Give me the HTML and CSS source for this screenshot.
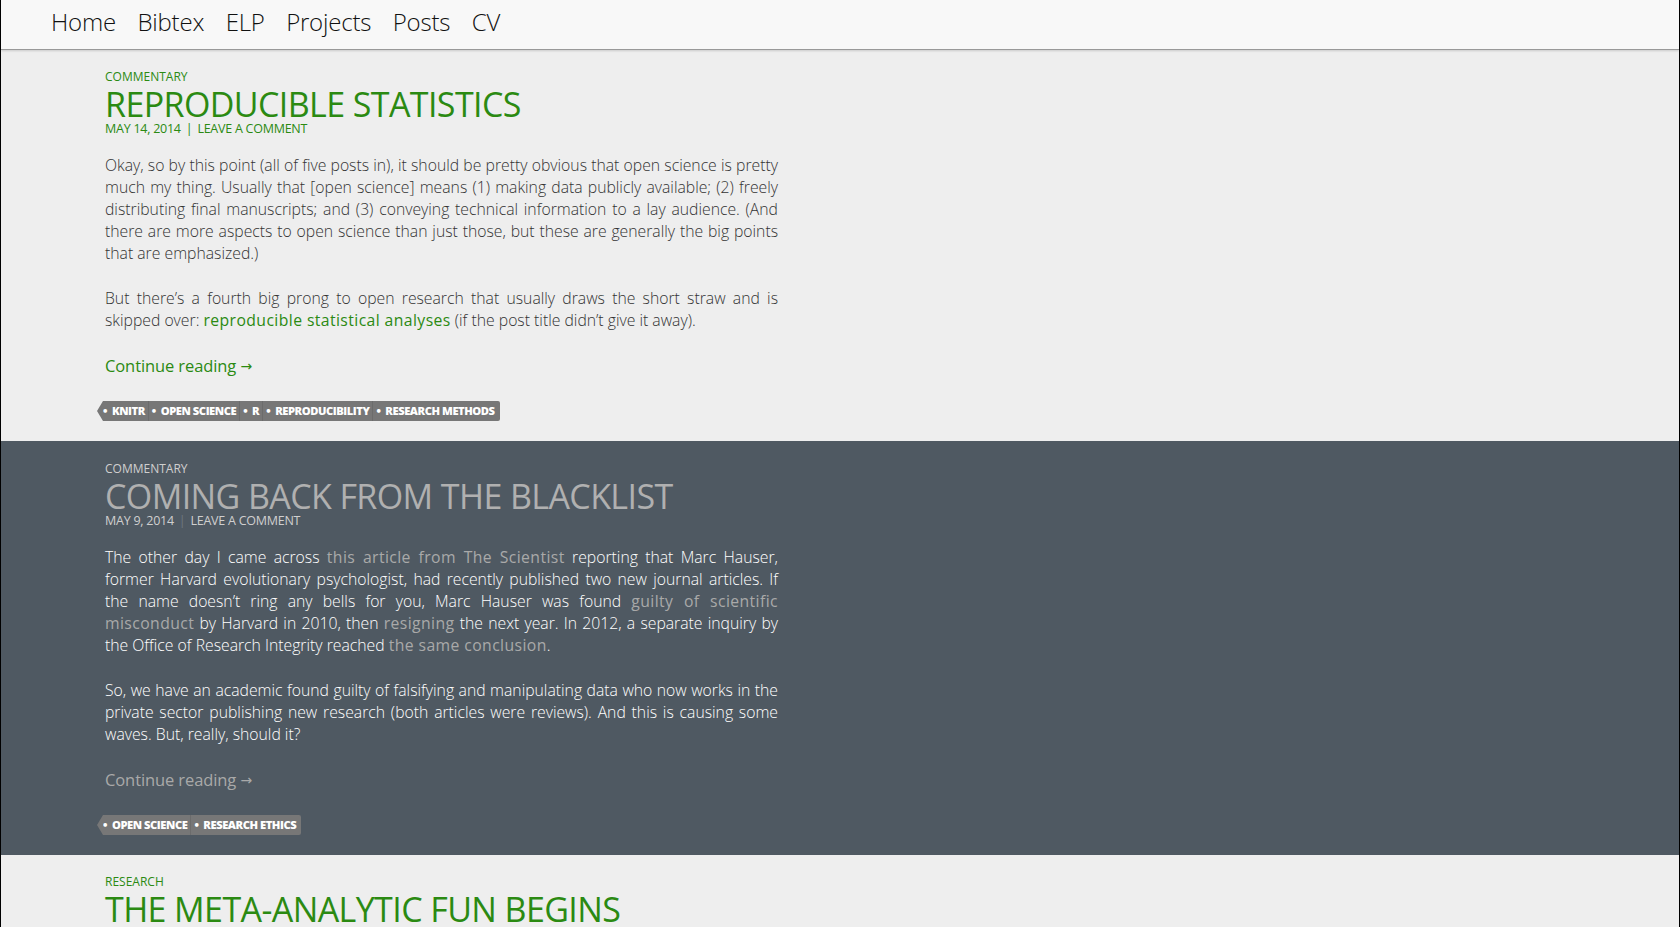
FILE: index.html
```html
<!DOCTYPE html>
<html lang="en">
<head>
<meta charset="utf-8">
<title>Posts</title>
<link rel="stylesheet" href="styles.css">
</head>
<body>
<header class="site-header">
  <nav class="nav">
    <a href="#">Home</a>
    <a href="#">Bibtex</a>
    <a href="#">ELP</a>
    <a href="#">Projects</a>
    <a href="#">Posts</a>
    <a href="#">CV</a>
  </nav>
</header>

<main>
  <article class="post post-light">
    <div class="post-inner">
      <div class="cat"><a href="#">Commentary</a></div>
      <h2 class="title"><a href="#">Reproducible Statistics</a></h2>
      <div class="meta"><a href="#">May 14, 2014</a><span class="sep">|</span><a href="#">Leave a comment</a></div>
      <div class="entry">
        <p>Okay, so by this point (all of five posts in), it should be pretty obvious that open science is pretty much my thing. Usually that [open science] means (1) making data publicly available; (2) freely distributing final manuscripts; and (3) conveying technical information to a lay audience. (And there are more aspects to open science than just those, but these are generally the big points that are emphasized.)</p>
        <p>But there’s a fourth big prong to open research that usually draws the short straw and is skipped over: <a href="#">reproducible statistical analyses</a> (if the post title didn’t give it away).</p>
        <p class="more"><a href="#">Continue reading <span class="arrow">→</span></a></p>
      </div>
      <ul class="tags">
        <li>knitr</li><li>open science</li><li>R</li><li>reproducibility</li><li>research methods</li>
      </ul>
    </div>
  </article>

  <article class="post post-dark">
    <div class="post-inner">
      <div class="cat"><a href="#">Commentary</a></div>
      <h2 class="title"><a href="#">Coming back from the blacklist</a></h2>
      <div class="meta"><a href="#">May 9, 2014</a><span class="sep">|</span><a href="#">Leave a comment</a></div>
      <div class="entry">
        <p>The other day I came across <a href="#">this article from The Scientist</a> reporting that Marc Hauser, former Harvard evolutionary psychologist, had recently published two new journal articles. If the name doesn’t ring any bells for you, Marc Hauser was found <a href="#">guilty of scientific misconduct</a> by Harvard in 2010, then <a href="#">resigning</a> the next year. In 2012, a separate inquiry by the Office of Research Integrity reached <a href="#">the same conclusion</a>.</p>
        <p>So, we have an academic found guilty of falsifying and manipulating data who now works in the private sector publishing new research (both articles were reviews). And this is causing some waves. But, really, should it?</p>
        <p class="more"><a href="#">Continue reading <span class="arrow">→</span></a></p>
      </div>
      <ul class="tags">
        <li>open science</li><li>research ethics</li>
      </ul>
    </div>
  </article>

  <article class="post post-light">
    <div class="post-inner">
      <div class="cat"><a href="#">Research</a></div>
      <h2 class="title"><a href="#">The meta-analytic fun begins</a></h2>
    </div>
  </article>
</main>
</body>
</html>
```

FILE: styles.css
```css
html, body {
  margin: 0;
  padding: 0;
}
body {
  background: #eeeeee;
  font-family: "Open Sans", "Liberation Sans", sans-serif;
  border-left: 1px solid #000;
  border-right: 1px solid #000;
  height: 927px;
  overflow: hidden;
  box-sizing: border-box;
}
a { text-decoration: none; }

.site-header {
  height: 49px;
  background: #f8f8f8;
  border-bottom: 1px solid #999;
  box-shadow: 0 1px 2px rgba(0,0,0,0.15);
  position: relative;
  z-index: 2;
}
.nav {
  display: flex;
  gap: 21.5px;
  padding-left: 50px;
  height: 44px;
  align-items: center;
}
.nav a {
  color: #111;
  font-size: 24px;
  font-weight: 300;
  line-height: 30px;
  letter-spacing: -0.2px;
}

.post {
  padding: 19px 0 20px;
}
.post-dark, .post-light + .post-light { padding-top: 20px; }
.post-inner {
  width: 673px;
  margin-left: 104px;
}
.cat {
  font-size: 12px;
  line-height: 16px;
  text-transform: uppercase;
}
.title {
  margin: 0;
  font-size: 34px;
  font-weight: 400;
  line-height: 38px;
  text-transform: uppercase;
  letter-spacing: -0.6px;
}
.meta {
  font-size: 12.5px;
  line-height: 12px;
  text-transform: uppercase;
  margin-bottom: 19px;
  letter-spacing: -0.25px;
}
.meta .sep {
  margin: 0 5px;
}
.entry p {
  margin: 0 0 23px;
  font-size: 15.75px;
  font-weight: 300;
  line-height: 22px;
  text-align: justify;
}
.entry p a {
  font-weight: 400;
  letter-spacing: 0.4px;
}
.entry p.more {
  font-size: 16.5px;
  line-height: 24px;
  font-weight: 400;
  margin-bottom: 23px;
}
.entry p.more a { letter-spacing: -0.1px; }
.arrow {
  font-family: "DejaVu Sans", sans-serif;
  font-size: 14px;
  vertical-align: 1px;
}
.tags {
  list-style: none;
  margin: 0 0 0 -8px;
  padding: 0 0 0 6px;
  display: flex;
  width: fit-content;
  height: 20px;
  position: relative;
}
.tags::before {
  content: "";
  position: absolute;
  left: 0;
  top: 0;
  border-top: 10px solid transparent;
  border-bottom: 10px solid transparent;
  border-right: 6px solid #777;
}
.tags li {
  background: #777;
  color: #fff;
  font-size: 11.2px;
  font-weight: 800;
  text-transform: uppercase;
  line-height: 20px;
  padding: 0 3px 0 3px;
  letter-spacing: -0.45px;
  border-left: 1px solid #6c6c6c;
}
.tags li:first-child { border-left: 0; padding-left: 0; }
.tags li:last-child { border-radius: 0 2px 2px 0; padding-right: 5px; }
.tags li::before {
  content: "•";
  margin-right: 5px;
}

/* light */
.post-light { background: #eeeeee; }
.post-light .cat a,
.post-light .title a,
.post-light .meta a,
.post-light .meta .sep,
.post-light .entry a { color: #2b8a12; }
.post-light .entry p { color: #333; }

/* dark */
.post-dark { background: #4f5962; }
.post-dark .cat a { color: #cfcfcf; }
.post-dark .title a { color: #b0b0b0; }
.post-dark .meta a { color: #cfcfcf; }
.post-dark .meta .sep { color: #6f7880; }
.post-dark .entry p { color: #fff; }
.post-dark .entry a { color: #a9a9a9; }
```
